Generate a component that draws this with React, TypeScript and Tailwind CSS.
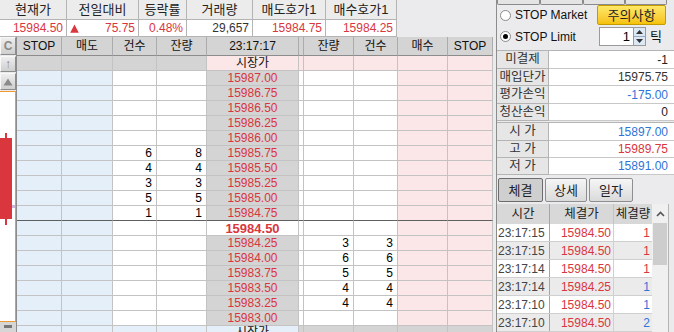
import React from 'react'

const RED = 'text-[#d9363e]'
const BLUE = 'text-[#2f74d8]'

const asks: [string, string, string][] = [
  ['15987.00', '', ''],
  ['15986.75', '', ''],
  ['15986.50', '', ''],
  ['15986.25', '', ''],
  ['15986.00', '', ''],
  ['15985.75', '6', '8'],
  ['15985.50', '4', '4'],
  ['15985.25', '3', '3'],
  ['15985.00', '5', '5'],
  ['15984.75', '1', '1'],
]

const bids: [string, string, string][] = [
  ['15984.25', '3', '3'],
  ['15984.00', '6', '6'],
  ['15983.75', '5', '5'],
  ['15983.50', '4', '4'],
  ['15983.25', '4', '4'],
  ['15983.00', '', ''],
]

const trades: [string, string, string, boolean][] = [
  ['23:17:15', '15984.50', '1', true],
  ['23:17:15', '15984.50', '1', true],
  ['23:17:14', '15984.50', '1', true],
  ['23:17:14', '15984.25', '1', false],
  ['23:17:10', '15984.50', '1', false],
  ['23:17:10', '15984.50', '2', false],
]

const GRID = 'grid grid-cols-[45px_51px_44px_50px_92px_5px_50px_44px_50px_45px]'

function Cell({ className = '', dark = false, children }: { className?: string; dark?: boolean; children?: React.ReactNode }) {
  return (
    <div
      className={`h-full flex items-center border-r border-b border-r-[#c3c3c3] ${
        dark ? 'border-b-[#5f5f5f]' : 'border-b-[#c3c3c3]'
      } ${className}`}
    >
      {children}
    </div>
  )
}

function TopHeader() {
  const labels = ['현재가', '전일대비', '등락률', '거래량', '매도호가1', '매수호가1']
  return (
    <div className="w-[397px] grid grid-cols-[67px_72px_48px_66px_73px_71px]">
      {labels.map((l) => (
        <div
          key={l}
          className="h-[20px] bg-[#ececec] border-r border-b border-[#b4b4b4] flex items-center justify-center text-[13px] text-[#222]"
        >
          {l}
        </div>
      ))}
      <div className={`h-[17px] bg-white border-r border-b border-[#b4b4b4] flex items-center justify-end pr-[3px] text-[12px] ${RED}`}>
        15984.50
      </div>
      <div className={`h-[17px] bg-white border-r border-b border-[#b4b4b4] flex items-center justify-between pl-[3px] pr-[3px] text-[12px] ${RED}`}>
        <svg width="9" height="9" viewBox="0 0 9 9">
          <path d="M4.5 0.5 L8.8 8.8 L0.2 8.8 Z" fill="#d9363e" />
        </svg>
        <span>75.75</span>
      </div>
      <div className={`h-[17px] bg-white border-r border-b border-[#b4b4b4] flex items-center justify-end pr-[3px] text-[12px] ${RED}`}>
        0.48%
      </div>
      <div className="h-[17px] bg-white border-r border-b border-[#b4b4b4] flex items-center justify-end pr-[3px] text-[12px] text-[#333]">
        29,657
      </div>
      <div className={`h-[17px] bg-white border-r border-b border-[#b4b4b4] flex items-center justify-end pr-[3px] text-[12px] ${RED}`}>
        15984.75
      </div>
      <div className={`h-[17px] bg-white border-r border-b border-[#b4b4b4] flex items-center justify-end pr-[3px] text-[12px] ${RED}`}>
        15984.25
      </div>
    </div>
  )
}

function SideButton({ h, children }: { h: string; children: React.ReactNode }) {
  return (
    <div
      className={`${h} w-[16px] bg-gradient-to-b from-[#eeeeee] to-[#cfcfcf] border border-t-[#f8f8f8] border-l-[#f8f8f8] border-r-[#8c8c8c] border-b-[#8c8c8c] flex items-center justify-center text-[12px] font-bold text-[#8a8a8a]`}
    >
      {children}
    </div>
  )
}

function LeftStrip() {
  return (
    <div className="w-[16px] flex flex-col">
      <SideButton h="h-[18px]">C</SideButton>
      <div className="h-[1px]" />
      <SideButton h="h-[16px]">↑</SideButton>
      <div className="h-[1px]" />
      <SideButton h="h-[17px]">
        <svg width="10" height="8" viewBox="0 0 10 8">
          <path d="M5 0.5 L9.5 7.5 L0.5 7.5 Z" fill="#8a8a8a" />
        </svg>
      </SideButton>
      <div className="h-[1px]" />
      <div className="h-[231px] bg-white border-t border-r border-b border-[#f29a2e]">
        <svg width="15" height="229" viewBox="0 0 15 229">
          <rect x="5" y="41" width="2" height="92" fill="#d9363e" />
          <rect x="0" y="46" width="12" height="81" fill="#d9363e" />
          <rect x="12" y="113" width="3" height="3" fill="#cdb8dc" />
        </svg>
      </div>
      <div className="flex-1 bg-[#d6d6d6] flex justify-center pt-[3px]">
        <div className="w-[8px] h-[3px] bg-[#777]" />
      </div>
    </div>
  )
}

function OrderGrid() {
  const heads = ['STOP', '매도', '건수', '잔량', '23:17:17', '', '잔량', '건수', '매수', 'STOP']
  return (
    <div className="w-[477px] border-l border-r border-l-[#8c8c8c] border-r-[#6e6e6e] text-[12px]">
      <div className={`${GRID} h-[19px]`}>
        {heads.map((h, i) => (
          <div
            key={i}
            className="h-full bg-[#d4d4d4] border-r border-b border-r-[#ababab] border-b-[#8c8c8c] flex items-center justify-center text-[#111]"
          >
            {h}
          </div>
        ))}
      </div>

      <div className={`${GRID} h-[15px]`}>
        <Cell className="bg-[#d4d4d4]" />
        <Cell className="bg-[#d4d4d4]" />
        <Cell className="bg-[#d4d4d4]" />
        <Cell className="bg-[#d4d4d4]" />
        <Cell className="bg-[#fbe6e8] justify-center text-[#111]">시장가</Cell>
        <Cell className="bg-[#fbe6e8]" />
        <Cell className="bg-[#fbe6e8]" />
        <Cell className="bg-[#fbe6e8]" />
        <Cell className="bg-[#fbe6e8]" />
        <Cell className="bg-[#fbe6e8]" />
      </div>

      {asks.map(([p, c, q], i) => {
        const dark = i === asks.length - 1
        return (
          <div key={p} className={`${GRID} h-[15px]`}>
            <Cell dark={dark} className="bg-[#e4effa]" />
            <Cell dark={dark} className="bg-[#e4effa]" />
            <Cell dark={dark} className="bg-white justify-end pr-[4px] text-black">{c}</Cell>
            <Cell dark={dark} className="bg-white justify-end pr-[4px] text-black">{q}</Cell>
            <Cell dark={dark} className={`bg-[#d4d4d4] justify-center ${RED}`}>{p}</Cell>
            <Cell dark={dark} className="bg-white" />
            <Cell dark={dark} className="bg-white" />
            <Cell dark={dark} className="bg-white" />
            <Cell dark={dark} className="bg-[#fbe6e8]" />
            <Cell dark={dark} className="bg-[#fbe6e8]" />
          </div>
        )
      })}

      <div className={`${GRID} h-[15px]`}>
        <Cell className="bg-[#e4effa]" />
        <Cell className="bg-[#e4effa]" />
        <Cell className="bg-white" />
        <Cell className="bg-white" />
        <Cell className={`bg-white justify-center font-bold text-[13px] ${RED}`}>15984.50</Cell>
        <Cell className="bg-white" />
        <Cell className="bg-white" />
        <Cell className="bg-white" />
        <Cell className="bg-[#fbe6e8]" />
        <Cell className="bg-[#fbe6e8]" />
      </div>

      {bids.map(([p, q, c]) => (
        <div key={p} className={`${GRID} h-[15px]`}>
          <Cell className="bg-[#e4effa]" />
          <Cell className="bg-[#e4effa]" />
          <Cell className="bg-white" />
          <Cell className="bg-white" />
          <Cell className={`bg-[#d4d4d4] justify-center ${RED}`}>{p}</Cell>
          <Cell className="bg-white" />
          <Cell className="bg-white justify-end pr-[4px] text-black">{q}</Cell>
          <Cell className="bg-white justify-end pr-[4px] text-black">{c}</Cell>
          <Cell className="bg-[#fbe6e8]" />
          <Cell className="bg-[#fbe6e8]" />
        </div>
      ))}

      <div className={`${GRID} h-[15px]`}>
        <Cell className="bg-[#e4effa]" />
        <Cell className="bg-[#e4effa]" />
        <Cell className="bg-[#e4effa]" />
        <Cell className="bg-[#e4effa]" />
        <Cell className="bg-[#e4effa] items-start justify-center text-[#111]">시장가</Cell>
        <Cell className="bg-[#d4d4d4]" />
        <Cell className="bg-[#d4d4d4]" />
        <Cell className="bg-[#d4d4d4]" />
        <Cell className="bg-[#d4d4d4]" />
        <Cell className="bg-[#d4d4d4]" />
      </div>
    </div>
  )
}

function Radio({ checked, label }: { checked: boolean; label: string }) {
  return (
    <div className="w-[100px] flex items-center gap-[4px] pl-[3px]">
      <div className="w-[11px] h-[11px] rounded-full border border-[#8a8a8a] bg-white flex items-center justify-center">
        {checked && <div className="w-[5px] h-[5px] rounded-full bg-black" />}
      </div>
      <span className="text-[12px] text-[#111]">{label}</span>
    </div>
  )
}

function InfoRow({ label, value, color, h }: { label: string; value: string; color: string; h: string }) {
  return (
    <div className={`${h} flex`}>
      <div className="w-[52px] bg-[#e6e6e6] border-r border-b border-[#b4b4b4] flex items-center justify-center text-[12.5px] text-[#333]">
        {label}
      </div>
      <div className={`flex-1 bg-white border-b border-[#c8c8c8] flex items-center justify-end pr-[6px] text-[12px] ${color}`}>
        {value}
      </div>
    </div>
  )
}

function TabButton({ active, children, w }: { active?: boolean; children: React.ReactNode; w: string }) {
  return (
    <div
      className={`${w} h-[24px] rounded-[2px] border flex items-center justify-center text-[13px] text-[#222] ${
        active
          ? 'bg-[#cfcfcf] border-[#6c6c6c]'
          : 'bg-gradient-to-b from-[#f6f6f6] to-[#dadada] border-[#8e8e8e]'
      }`}
    >
      {children}
    </div>
  )
}

function RightPanel() {
  return (
    <div className="w-[178px] flex flex-col border-l border-[#8c8c8c]">
      <div className="h-[6px] flex">
        {['w-[43px]', 'w-[43px]', 'w-[42px]', 'w-[42px]'].map((w, i) => (
          <div key={i} className={`${w} h-full bg-[#e4e4e4] border-l border-r border-b border-[#8a8a8a] rounded-b-[2px]`} />
        ))}
      </div>

      <div className="h-[22px] flex items-center">
        <Radio checked={false} label="STOP Market" />
        <div className="w-[69px] h-[20px] rounded-[2px] border border-[#c59c00] bg-gradient-to-b from-[#ffe866] to-[#f5c200] flex items-center justify-center text-[13px] text-[#222]">
          주의사항
        </div>
      </div>

      <div className="h-[22px] mt-[2px] flex items-center">
        <Radio checked={true} label="STOP Limit" />
        <div className="ml-[2px] w-[35px] h-[19px] bg-white border border-[#9a9a9a] flex items-center justify-end pr-[3px] text-[13px] text-black">
          1
        </div>
        <div className="w-[12px] h-[19px] flex flex-col border border-l-0 border-[#9a9a9a]">
          <div className="h-1/2 bg-[#dbe8f5] border-b border-[#9aaabb] flex items-center justify-center">
            <svg width="7" height="4" viewBox="0 0 7 4">
              <path d="M3.5 0 L7 4 L0 4 Z" fill="#333" />
            </svg>
          </div>
          <div className="h-1/2 bg-[#dbe8f5] flex items-center justify-center">
            <svg width="7" height="4" viewBox="0 0 7 4">
              <path d="M0 0 L7 0 L3.5 4 Z" fill="#333" />
            </svg>
          </div>
        </div>
        <span className="ml-[4px] text-[13px] text-[#111]">틱</span>
      </div>

      <div className="mt-[4px] border-t border-[#b4b4b4]">
        <InfoRow h="h-[18px]" label="미결제" value="-1" color="text-[#222]" />
        <InfoRow h="h-[17px]" label="매입단가" value="15975.75" color="text-[#333]" />
        <InfoRow h="h-[18px]" label="평가손익" value="-175.00" color={BLUE} />
        <InfoRow h="h-[17px]" label="청산손익" value="0" color="text-[#222]" />
        <div className="h-[2px] border-b border-[#b4b4b4]" />
        <InfoRow h="h-[18px]" label="시  가" value="15897.00" color={BLUE} />
        <InfoRow h="h-[17px]" label="고  가" value="15989.75" color={RED} />
        <InfoRow h="h-[17px]" label="저  가" value="15891.00" color={BLUE} />
      </div>

      <div className="mt-[3px] flex gap-[2px] pl-[1px]">
        <TabButton active w="w-[45px]">체결</TabButton>
        <TabButton w="w-[42px]">상세</TabButton>
        <TabButton w="w-[44px]">일자</TabButton>
      </div>

      <div className="mt-[2px] flex">
        <div className="w-[155px] flex flex-col">
          <div className="h-[20px] grid grid-cols-[53px_64px_38px] bg-[#d8d8d8] text-[12.5px] text-[#222]">
            <div className="border-r border-[#a6a6a6] flex items-center justify-center">시간</div>
            <div className="border-r border-[#c4c4c4] flex items-center justify-center">체결가</div>
            <div className="flex items-center justify-center">체결량</div>
          </div>
          {trades.map(([t, p, v, up], i) => (
            <div
              key={i}
              className={`h-[18px] grid grid-cols-[53px_64px_38px] border-b border-[#d0d0d0] text-[12px] ${
                i % 2 === 0 ? 'bg-white' : 'bg-[#ebebeb]'
              }`}
            >
              <div className="border-r border-[#a6a6a6] flex items-center pl-[1px] text-[#444]">{t}</div>
              <div className={`border-r border-[#d0d0d0] flex items-center justify-end pr-[2px] ${RED}`}>{p}</div>
              <div className={`flex items-center justify-end pr-[2px] ${up ? RED : BLUE}`}>{v}</div>
            </div>
          ))}
        </div>
        <div className="w-[16px] bg-[#f0f0f0] flex flex-col">
          <div className="h-[19px] flex items-center justify-center">
            <svg width="9" height="6" viewBox="0 0 9 6">
              <path d="M1 5 L4.5 1.5 L8 5" stroke="#555" strokeWidth="1.6" fill="none" />
            </svg>
          </div>
          <div className="h-[42px] mx-[1px] bg-[#cdcdcd]" />
        </div>
        <div className="flex-1 border-l border-[#b4b4b4]" />
      </div>
    </div>
  )
}

export default function App() {
  return (
    <div className="w-[674px] h-[332px] overflow-hidden bg-[#ebebee] flex font-['Liberation_Sans','Noto_Sans_CJK_KR',sans-serif] leading-none">
      <div className="w-[496px] flex flex-col">
        <TopHeader />
        <div className="h-[3px]" />
        <div className="flex">
          <LeftStrip />
          <OrderGrid />
        </div>
      </div>
      <RightPanel />
    </div>
  )
}
